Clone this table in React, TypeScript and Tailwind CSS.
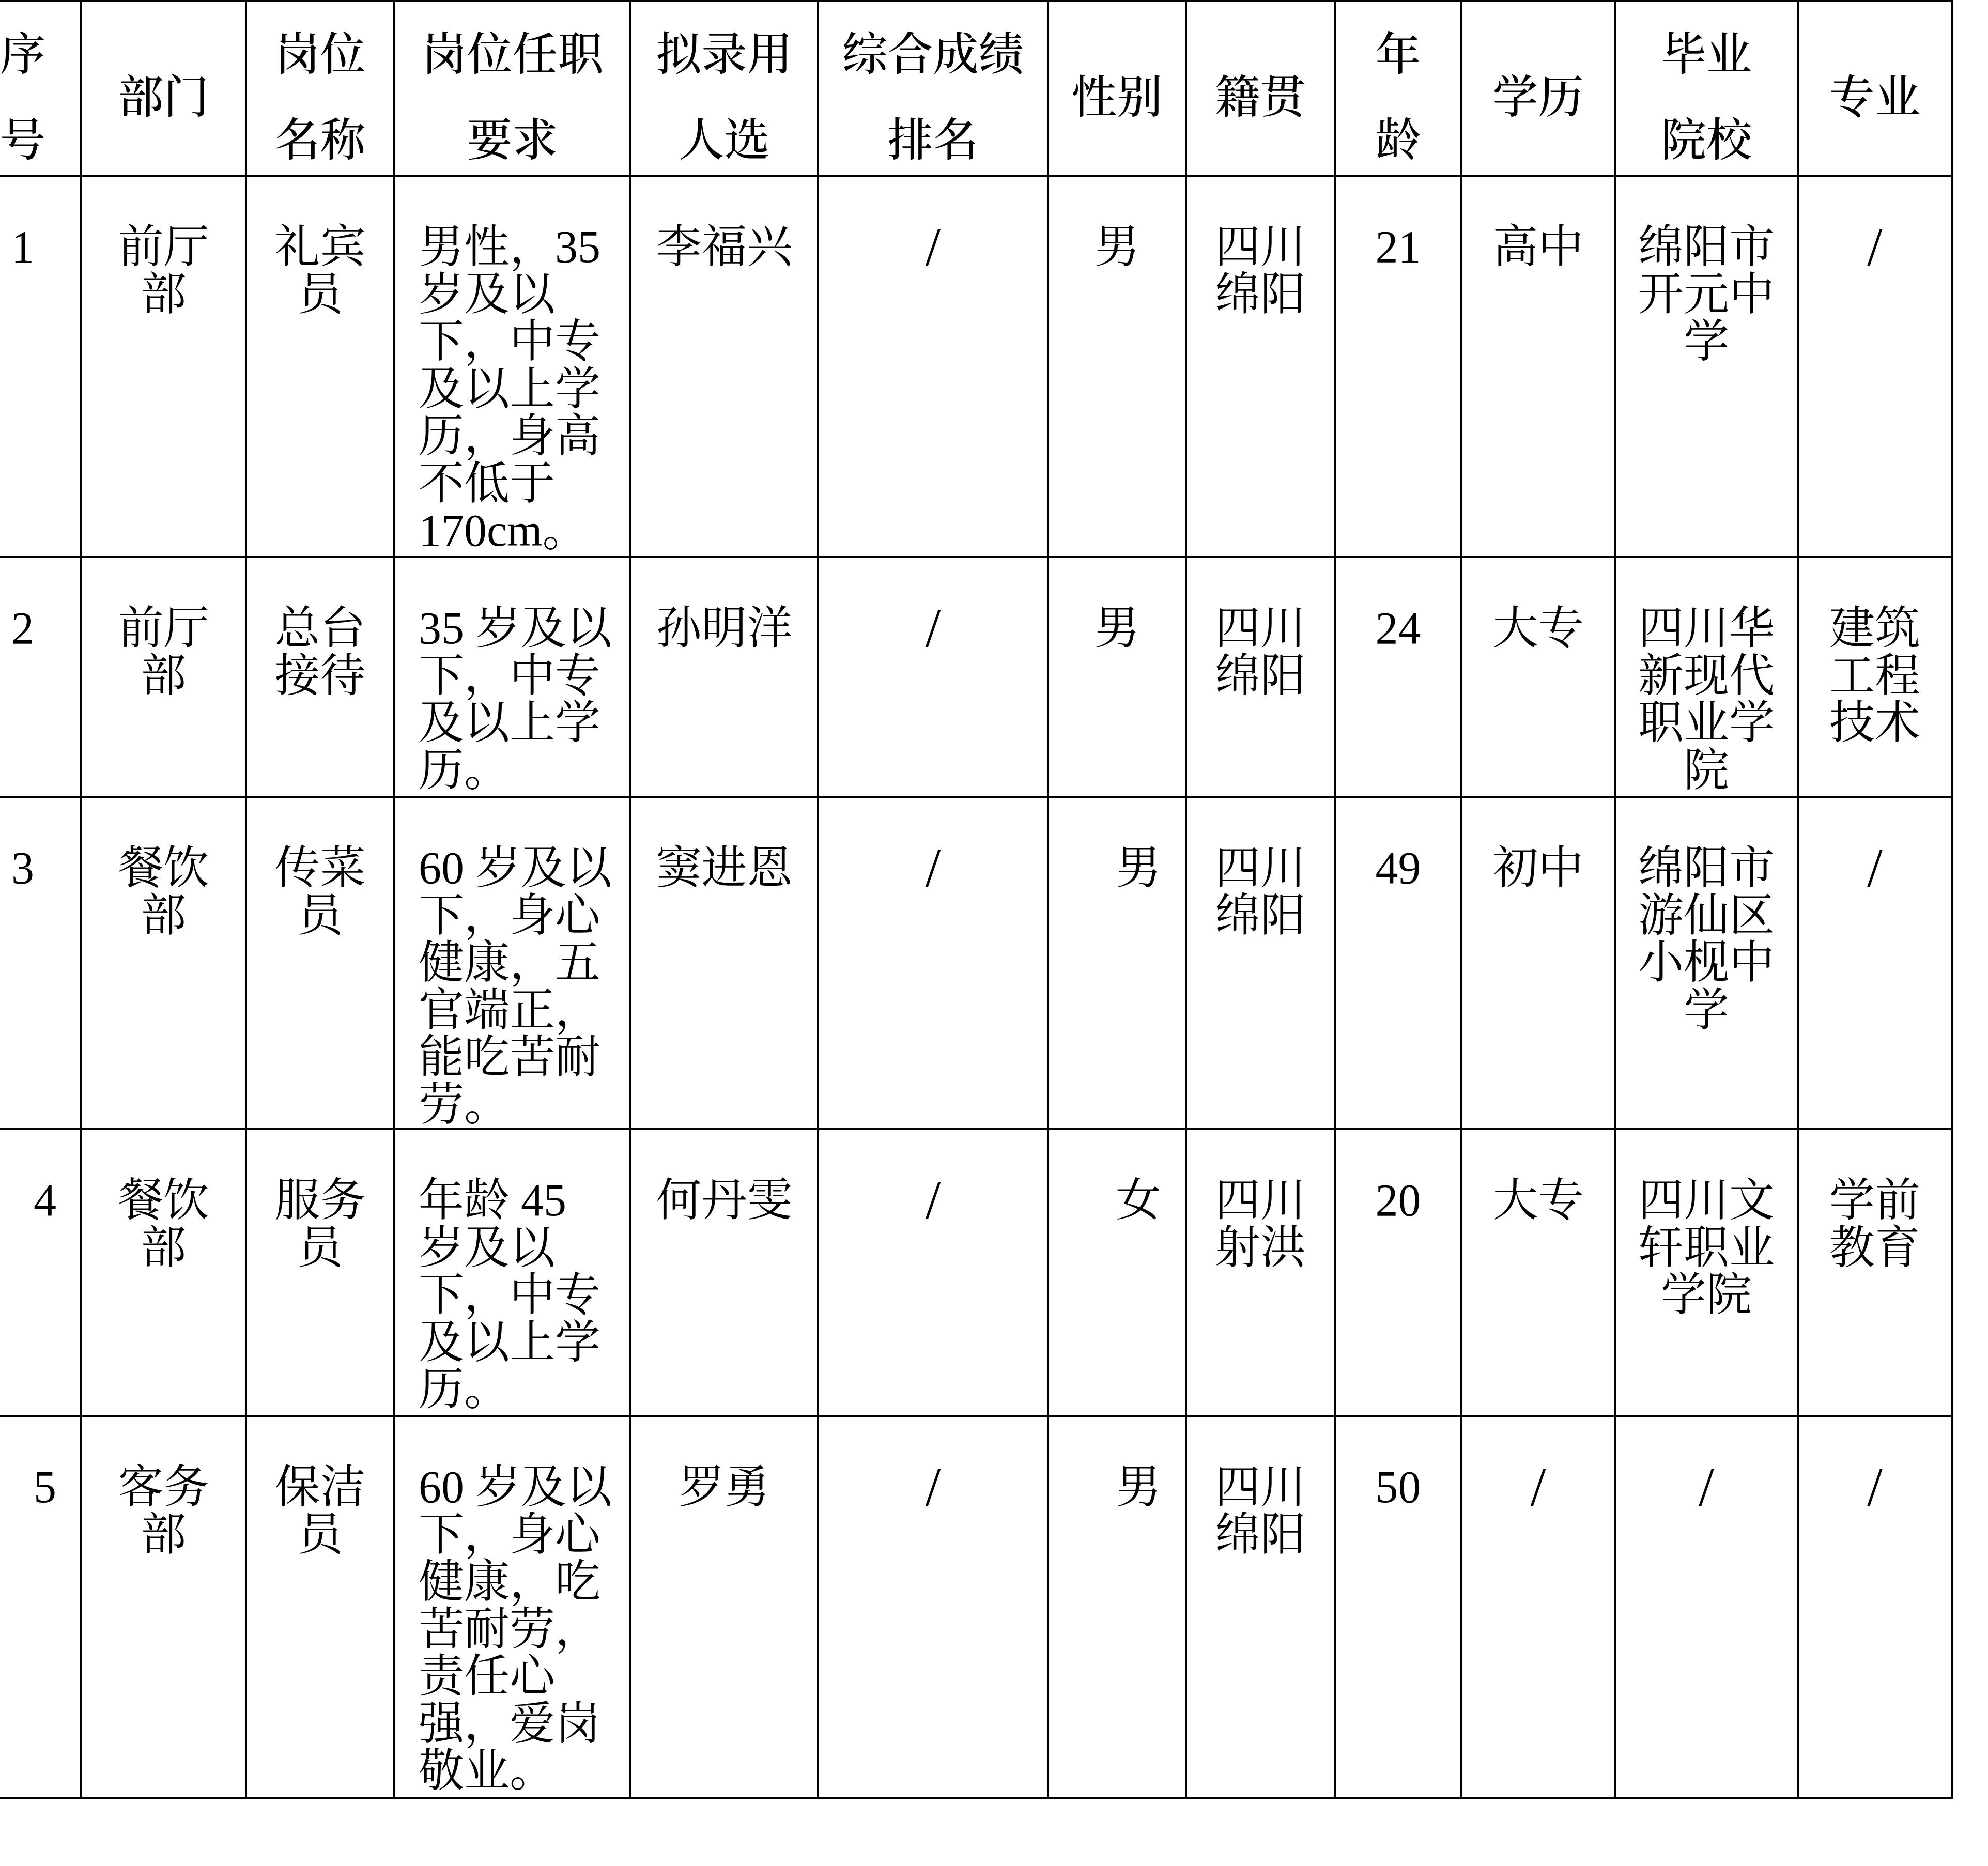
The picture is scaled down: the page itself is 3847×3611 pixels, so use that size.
const GRID =
  'grid grid-cols-[159px_319px_287px_457px_363px_445px_267px_288px_245px_297px_354px_299px]';

type Row = {
  height: string;
  no: string;
  noPad: string;
  dept: string[];
  post: string[];
  req: string[];
  name: string;
  sex: string;
  sexRight: boolean;
  origin: string[];
  age: string;
  edu: string;
  school: string[];
  major: string[];
};

const headers: string[][] = [
  ['序', '号'],
  ['部门'],
  ['岗位', '名称'],
  ['岗位任职', '要求'],
  ['拟录用', '人选'],
  ['综合成绩', '排名'],
  ['性别'],
  ['籍贯'],
  ['年', '龄'],
  ['学历'],
  ['毕业', '院校'],
  ['专业'],
];

const rows: Row[] = [
  {
    height: 'h-[738px]',
    no: '1',
    noPad: 'pl-[22px]',
    dept: ['前厅', '部'],
    post: ['礼宾', '员'],
    req: ['男性，35', '岁及以', '下，中专', '及以上学', '历，身高', '不低于', '170cm。'],
    name: '李福兴',
    sex: '男',
    sexRight: false,
    origin: ['四川', '绵阳'],
    age: '21',
    edu: '高中',
    school: ['绵阳市', '开元中', '学'],
    major: ['/'],
  },
  {
    height: 'h-[464px]',
    no: '2',
    noPad: 'pl-[22px]',
    dept: ['前厅', '部'],
    post: ['总台', '接待'],
    req: ['35 岁及以', '下，中专', '及以上学', '历。'],
    name: '孙明洋',
    sex: '男',
    sexRight: false,
    origin: ['四川', '绵阳'],
    age: '24',
    edu: '大专',
    school: ['四川华', '新现代', '职业学', '院'],
    major: ['建筑', '工程', '技术'],
  },
  {
    height: 'h-[643px]',
    no: '3',
    noPad: 'pl-[22px]',
    dept: ['餐饮', '部'],
    post: ['传菜', '员'],
    req: ['60 岁及以', '下，身心', '健康，五', '官端正，', '能吃苦耐', '劳。'],
    name: '窦进恩',
    sex: '男',
    sexRight: true,
    origin: ['四川', '绵阳'],
    age: '49',
    edu: '初中',
    school: ['绵阳市', '游仙区', '小枧中', '学'],
    major: ['/'],
  },
  {
    height: 'h-[555px]',
    no: '4',
    noPad: 'pl-[65px]',
    dept: ['餐饮', '部'],
    post: ['服务', '员'],
    req: ['年龄 45', '岁及以', '下，中专', '及以上学', '历。'],
    name: '何丹雯',
    sex: '女',
    sexRight: true,
    origin: ['四川', '射洪'],
    age: '20',
    edu: '大专',
    school: ['四川文', '轩职业', '学院'],
    major: ['学前', '教育'],
  },
  {
    height: 'h-[740px]',
    no: '5',
    noPad: 'pl-[65px]',
    dept: ['客务', '部'],
    post: ['保洁', '员'],
    req: ['60 岁及以', '下，身心', '健康，吃', '苦耐劳，', '责任心', '强，爱岗', '敬业。'],
    name: '罗勇',
    sex: '男',
    sexRight: true,
    origin: ['四川', '绵阳'],
    age: '50',
    edu: '/',
    school: ['/'],
    major: ['/'],
  },
];

// the thin steep slash of the source doc reads closer to a serif "/" than the CJK full-width one
const Lines = ({ lines }: { lines: string[] }) => (
  <>
    {lines.map((l, i) => (
      <div key={i} className="whitespace-pre">
        {l === '/' ? <span className="text-[106px] font-['Liberation_Serif',serif]">/</span> : l}
      </div>
    ))}
  </>
);

const BodyCell = ({
  lines,
  className = 'text-center',
  last = false,
  bottom = false,
}: {
  lines: string[];
  className?: string;
  last?: boolean;
  bottom?: boolean;
}) => (
  <div
    className={`border-black pt-[90px] leading-[91.5px] ${last ? 'border-r-[5px]' : 'border-r-4'} ${
      bottom ? 'border-b-[5px]' : 'border-b-4'
    } ${className}`}
  >
    <Lines lines={lines} />
  </div>
);

export default function App() {
  return (
    <div className="w-[3847px] h-[3611px] bg-white text-black text-[88px] font-['Liberation_Serif','Noto_Serif_CJK_SC','Noto_Sans_CJK_SC',serif]">
      <div className="w-[3780px]">
        {/* header */}
        <div className={`${GRID} h-[342px] border-t-4 border-black`}>
          {headers.map((h, i) => (
            <div
              key={i}
              className={`flex flex-col justify-center gap-[78px] pt-[36px] leading-[88px] font-medium border-b-4 border-black ${
                i === headers.length - 1 ? 'border-r-[5px]' : 'border-r-4'
              } ${i === 0 ? 'items-start' : 'items-center'}`}
            >
              {h.map((t, j) => (
                <div key={j}>{t}</div>
              ))}
            </div>
          ))}
        </div>

        {/* body */}
        {rows.map((r, idx) => {
          const bottom = idx === rows.length - 1;
          return (
            <div key={r.no} className={`${GRID} ${r.height}`}>
              <BodyCell lines={[r.no]} className={`text-left ${r.noPad}`} bottom={bottom} />
              <BodyCell lines={r.dept} bottom={bottom} />
              <BodyCell lines={r.post} bottom={bottom} />
              <BodyCell lines={r.req} className="text-left pl-[45px]" bottom={bottom} />
              <BodyCell lines={[r.name]} bottom={bottom} />
              <BodyCell lines={['/']} bottom={bottom} />
              <BodyCell
                lines={[r.sex]}
                className={r.sexRight ? 'text-right pr-[46px]' : 'text-center'}
                bottom={bottom}
              />
              <BodyCell lines={r.origin} bottom={bottom} />
              <BodyCell lines={[r.age]} bottom={bottom} />
              <BodyCell lines={[r.edu]} bottom={bottom} />
              <BodyCell lines={r.school} bottom={bottom} />
              <BodyCell lines={r.major} bottom={bottom} last />
            </div>
          );
        })}
      </div>
    </div>
  );
}
